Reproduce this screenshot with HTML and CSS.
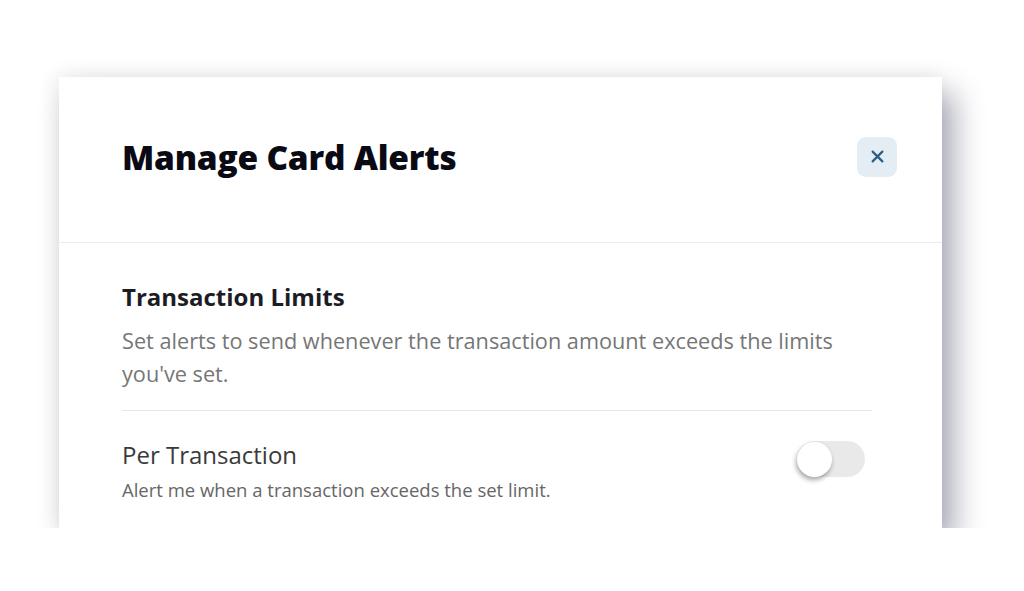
FILE: index.html
```html
<!DOCTYPE html>
<html lang="en">
<head>
<meta charset="utf-8">
<title>Manage Card Alerts</title>
<link rel="stylesheet" href="styles.css">
</head>
<body>
<div class="modal">
  <div class="modal-header">
    <h1 class="modal-title">Manage Card Alerts</h1>
    <button class="close-btn" aria-label="Close">
      <svg width="13" height="13" viewBox="0 0 12 12"><path d="M1.5 1.5 L10.5 10.5 M10.5 1.5 L1.5 10.5" stroke="#2c5d85" stroke-width="2" stroke-linecap="round"/></svg>
    </button>
  </div>
  <div class="modal-body">
    <h2 class="section-title">Transaction Limits</h2>
    <p class="section-desc">Set alerts to send whenever the transaction amount exceeds the limits you've set.</p>
    <div class="divider"></div>
    <div class="setting-row">
      <div class="setting-text">
        <div class="setting-label">Per Transaction</div>
        <div class="setting-hint">Alert me when a transaction exceeds the set limit.</div>
      </div>
      <div class="toggle"><span class="knob"></span></div>
    </div>
  </div>
</div>
</body>
</html>
```
FILE: styles.css
```css
html, body {
  margin: 0;
  padding: 0;
  background: #ffffff;
}
body {
  font-family: "Open Sans", "Noto Sans", sans-serif;
  padding: 77px 0 0 59px;
}
.modal {
  width: 883px;
  height: 451px;
  background: #ffffff;
  box-shadow: 12px 16px 28px rgba(50, 50, 80, 0.42), -4px -4px 18px rgba(0, 0, 0, 0.05);
  display: flex;
  flex-direction: column;
}
.modal-header {
  height: 166px;
  border-bottom: 1px solid #ececec;
  display: flex;
  align-items: center;
  justify-content: space-between;
  padding: 0 45px 6px 63px;
  box-sizing: border-box;
}
.modal-title {
  margin: 0;
  font-size: 33.4px;
  font-weight: 800;
  color: #0a0a14;
  letter-spacing: -0.2px;
  line-height: 40px;
}
.close-btn {
  width: 40px;
  height: 40px;
  border: none;
  border-radius: 9px;
  background: #e3edf3;
  display: flex;
  align-items: center;
  justify-content: center;
  padding: 0;
}
.modal-body {
  padding: 39px 70px 0 63px;
}
.section-title {
  margin: 0;
  font-size: 24px;
  font-weight: 700;
  color: #1c1c24;
  line-height: 30px;
}
.section-desc {
  margin: 12px 0 0;
  font-size: 21.7px;
  line-height: 33px;
  color: #767676;
}
.divider {
  height: 1px;
  background: #e6e6e6;
  margin-top: 20px;
}
.setting-row {
  display: flex;
  align-items: flex-start;
  justify-content: space-between;
  padding-top: 28px;
}
.setting-label {
  font-size: 24px;
  color: #3a3a3a;
  line-height: 32px;
}
.setting-hint {
  margin-top: 7px;
  font-size: 18.5px;
  color: #666666;
  line-height: 24px;
}
.toggle {
  width: 68px;
  height: 36px;
  border-radius: 18px;
  background: #e9e9e9;
  position: relative;
  margin: 2px 7px 0 0;
}
.knob {
  position: absolute;
  left: 0;
  top: 1px;
  width: 35px;
  height: 35px;
  border-radius: 50%;
  background: #ffffff;
  box-shadow: -1px 3px 5px rgba(0, 0, 0, 0.35);
}
```
